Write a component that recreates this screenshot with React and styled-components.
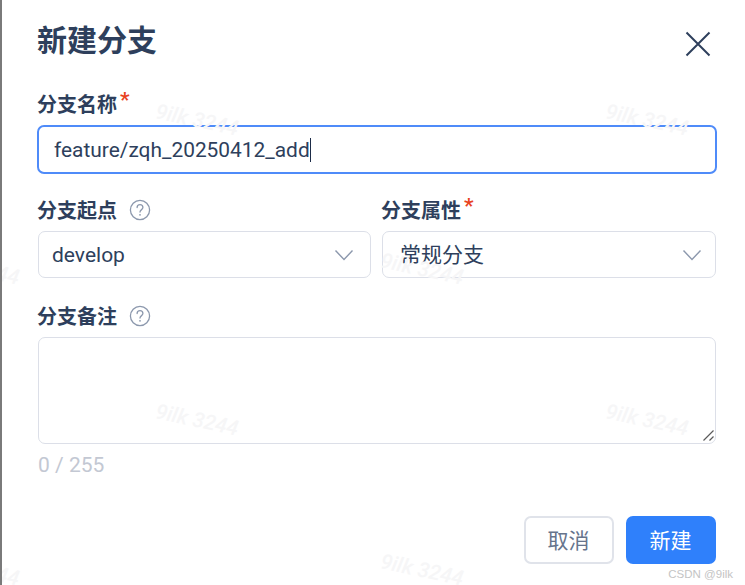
import React from "react";
import styled, { createGlobalStyle } from "styled-components";

const Global = createGlobalStyle`
  html, body { margin: 0; padding: 0; background: #fff; }
  * { box-sizing: border-box; }
`;

const FONT = `Roboto, "Noto Sans CJK SC", sans-serif`;

const Page = styled.div`
  position: relative;
  width: 745px;
  height: 585px;
  overflow: hidden;
  border-left: 2px solid #7a7a7a;
  background: #fff;
  padding: 0 28px 0 35px;
  font-family: ${FONT};
  color: #2e3f5c;
`;

const Header = styled.header`
  display: flex;
  justify-content: space-between;
  align-items: flex-start;
  height: 88px;
  padding-top: 20px;
`;

const Title = styled.h1`
  margin: 0;
  font-size: 30px;
  line-height: 42px;
  font-weight: 700;
  color: #2e3f5c;
`;

const Close = styled.button`
  border: 0;
  background: none;
  padding: 0;
  margin: 11px 6px 0 0;
  width: 26px;
  height: 26px;
  display: block;
  color: #2e3f5c;
`;

const Field = styled.div`
  display: flex;
  flex-direction: column;
  min-width: 0;
`;

const Label = styled.div`
  display: flex;
  align-items: center;
  height: 37px;
  padding-bottom: 7px;
  margin-left: ${(p) => p.$shift || 0}px;
  font-size: 20px;
  font-weight: 700;
  color: #2e3f5c;
`;

const Star = styled.span`
  color: #e8431f;
  font-size: 21px;
  line-height: 1;
  font-weight: 700;
  margin: -6px 0 0 3px;
`;

const Help = styled.svg`
  width: 22px;
  height: 22px;
  margin: 2px 0 0 12px;
  color: #8c98ad;
`;

const NameInput = styled.div`
  height: 49px;
  border: 2px solid #4f8bf9;
  border-radius: 7px;
  padding-left: 15px;
  display: flex;
  align-items: center;
  font-size: 20.9px;
  color: #2e3f5c;
`;

const Caret = styled.span`
  display: inline-block;
  width: 1px;
  height: 24px;
  background: #1d2c48;
`;

const Row = styled.div`
  display: grid;
  grid-template-columns: 333px 334px;
  column-gap: 11px;
  margin: 20px 0 0 1px;
`;

const Select = styled.div`
  height: 47px;
  border: 1px solid #dcdfe8;
  border-radius: 7px;
  padding: 0 ${(p) => p.$end}px 0 ${(p) => p.$pad}px;
  display: flex;
  align-items: center;
  justify-content: space-between;
  font-size: 21px;
  color: #2e3f5c;
`;

const CjkValue = styled.span`
  margin-top: -3px;
`;

const Chevron = styled.svg`
  width: 20px;
  height: 12px;
  color: #8c98ad;
`;

const NoteField = styled(Field)`
  margin: 22px 0 0 1px;
`;

const NoteBox = styled.div`
  position: relative;
  width: 678px;
  height: 107px;
`;

const Note = styled.textarea`
  display: block;
  width: 100%;
  height: 100%;
  border: 1px solid #dcdfe8;
  border-radius: 7px;
  resize: none;
  background: transparent;
  outline: none;
  margin: 0;
`;

const Grip = styled.svg`
  position: absolute;
  right: 2px;
  bottom: 3px;
  width: 11px;
  height: 11px;
  color: #5a5a5a;
`;

const Counter = styled.div`
  margin: 9px 0 0 0;
  font-size: 21px;
  line-height: 24px;
  color: #c3c8d3;
`;

const Footer = styled.footer`
  display: flex;
  justify-content: flex-end;
  gap: 12px;
  margin: 39px 0 0 0;
  padding-right: 1px;
`;

const Button = styled.button`
  width: 90px;
  height: 48px;
  border-radius: 7px;
  font-family: ${FONT};
  font-size: 21px;
  padding: 0 1px 2px 0;
  border: ${(p) => (p.$primary ? "0" : "2px solid #e0e3ea")};
  background: ${(p) => (p.$primary ? "#2f80fb" : "#fff")};
  color: ${(p) => (p.$primary ? "#fff" : "#66748c")};
`;

const Watermark = styled.span`
  position: absolute;
  left: ${(p) => p.$x}px;
  top: ${(p) => p.$y}px;
  font-size: 21px;
  font-style: italic;
  font-weight: 500;
  color: #f6f6f7;
  transform: rotate(12deg);
  white-space: nowrap;
  pointer-events: none;
`;

const Credit = styled.span`
  position: absolute;
  right: 12px;
  bottom: 5px;
  font-family: "Liberation Sans", sans-serif;
  font-size: 11.5px;
  color: #c4c4c4;
`;

const Layer = styled.div`
  position: absolute;
  inset: 0;
`;

const QuestionIcon = () => (
  <Help viewBox="0 0 22 22" fill="none" stroke="currentColor">
    <circle cx="11" cy="11" r="9.6" strokeWidth="1.3" />
    <path d="M8.1 8.6a2.9 2.9 0 0 1 5.8 0c0 1.9-2.9 2.2-2.9 4.4" strokeWidth="1.3" strokeLinecap="round" />
    <circle cx="11" cy="15.8" r="0.9" fill="currentColor" stroke="none" />
  </Help>
);

const DownIcon = () => (
  <Chevron viewBox="0 0 20 12" fill="none" stroke="currentColor" strokeWidth="1.4">
    <path d="M1.5 1.5 10 10.5l8.5-9" />
  </Chevron>
);

const marks = [
  [153, 108], [603, 108], [378, 257], [-66, 257], [153, 408], [603, 408], [378, 558], [-66, 558],
];

export default function App() {
  return (
    <Page>
      <Global />
      <Layer>
        {marks.map(([x, y]) => (
          <Watermark key={`${x}-${y}`} $x={x} $y={y}>9ilk 3244</Watermark>
        ))}
      </Layer>
      <Header>
        <Title>新建分支</Title>
        <Close aria-label="close">
          <svg width="26" height="26" viewBox="0 0 26 26" fill="none" stroke="currentColor" strokeWidth="2">
            <path d="M1.5 1.5 24.5 24.5M24.5 1.5 1.5 24.5" />
          </svg>
        </Close>
      </Header>
      <Field>
        <Label>分支名称<Star>*</Star></Label>
        <NameInput>feature/zqh_20250412_add<Caret /></NameInput>
      </Field>
      <Row>
        <Field>
          <Label $shift={-1}>分支起点<QuestionIcon /></Label>
          <Select $pad={13} $end={16}>develop<DownIcon /></Select>
        </Field>
        <Field>
          <Label $shift={-1}>分支属性<Star>*</Star></Label>
          <Select $pad={17} $end={13}><CjkValue>常规分支</CjkValue><DownIcon /></Select>
        </Field>
      </Row>
      <NoteField>
        <Label $shift={-1}>分支备注<QuestionIcon /></Label>
        <NoteBox>
          <Note />
          <Grip viewBox="0 0 11 11" fill="none" stroke="currentColor" strokeWidth="1.2">
            <path d="M0.5 10.5 10.5 0.5M6.5 10.5l4-4" />
          </Grip>
        </NoteBox>
        <Counter>0 / 255</Counter>
      </NoteField>
      <Footer>
        <Button>取消</Button>
        <Button $primary>新建</Button>
      </Footer>
      <Credit>CSDN @9ilk</Credit>
    </Page>
  );
}
